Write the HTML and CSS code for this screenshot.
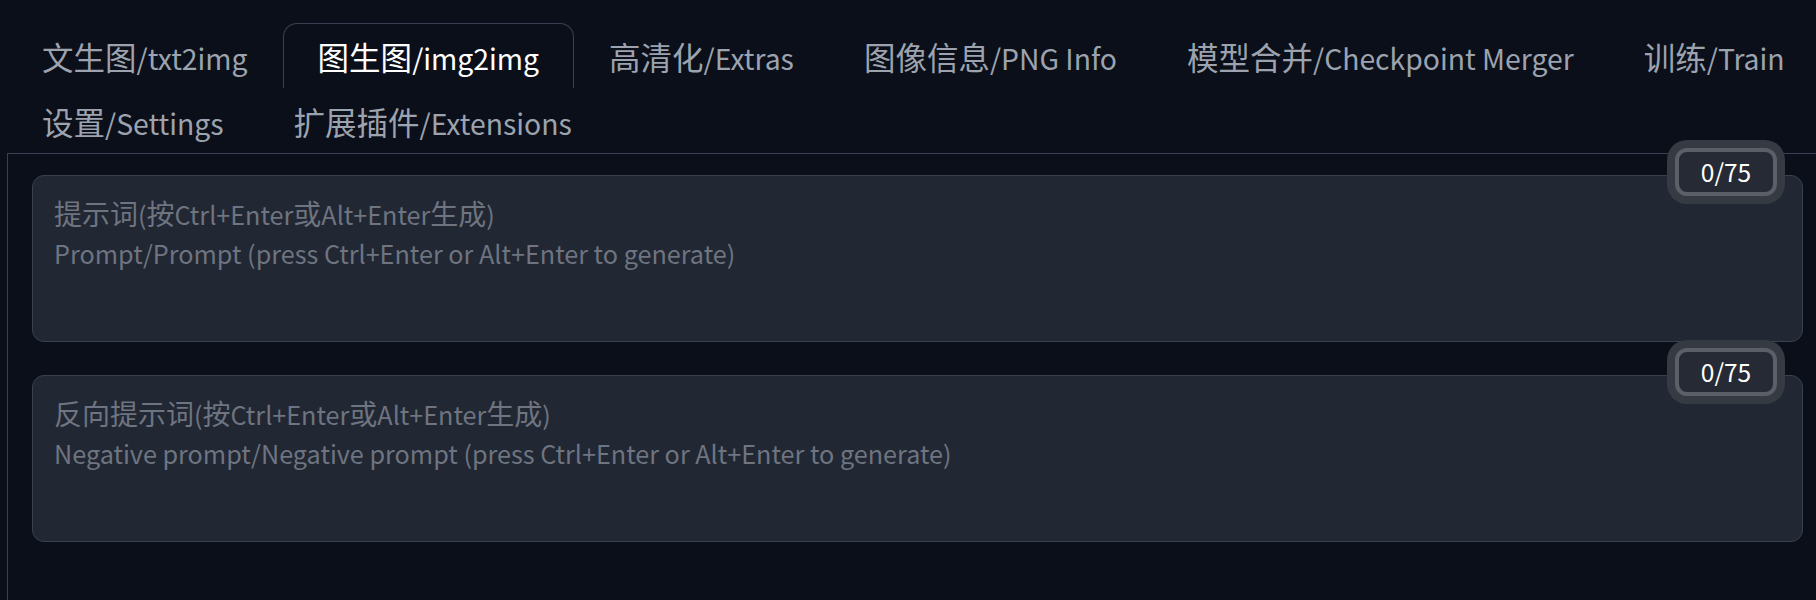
FILE: index.html
```html
<!DOCTYPE html>
<html lang="zh">
<head>
<meta charset="utf-8">
<link rel="stylesheet" href="styles.css">
</head>
<body>
<div class="app">
  <div class="tabs">
    <div class="tab">文生图<span class="en">/txt2img</span></div>
    <div class="tab active">图生图<span class="en">/img2img</span></div>
    <div class="tab">高清化<span class="en">/Extras</span></div>
    <div class="tab">图像信息<span class="en">/PNG Info</span></div>
    <div class="tab">模型合并<span class="en">/Checkpoint Merger</span></div>
    <div class="tab">训练<span class="en">/Train</span></div>
    <div class="tab">设置<span class="en">/Settings</span></div>
    <div class="tab">扩展插件<span class="en">/Extensions</span></div>
  </div>
  <div class="panel">
    <div class="prompt">
      <div class="field">
        <div class="ph">提示词<span class="en">(</span>按<span class="en">Ctrl+Enter</span>或<span class="en">Alt+Enter</span>生成<span class="en">)</span></div>
        <div class="ph"><span class="en">Prompt/Prompt (press Ctrl+Enter or Alt+Enter to generate)</span></div>
      </div>
      <span class="counter">0/75</span>
    </div>
    <div class="prompt">
      <div class="field">
        <div class="ph">反向提示词<span class="en">(</span>按<span class="en">Ctrl+Enter</span>或<span class="en">Alt+Enter</span>生成<span class="en">)</span></div>
        <div class="ph"><span class="en">Negative prompt/Negative prompt (press Ctrl+Enter or Alt+Enter to generate)</span></div>
      </div>
      <span class="counter">0/75</span>
    </div>
  </div>
</div>
</body>
</html>
```

FILE: styles.css
```css
html, body {
  margin: 0;
  padding: 0;
  background: #0b0f19;
  height: 100%;
  overflow: hidden;
}
.app {
  font-family: "Noto Sans CJK SC", "Noto Sans", sans-serif;
  width: 1824px;
  margin-left: 7px;
  padding-top: 23px;
  height: 100%;
  box-sizing: border-box;
  display: flex;
  flex-direction: column;
}
.en {
  font-size: 0.9em;
}
.tabs {
  display: flex;
  flex-wrap: wrap;
}
.tab {
  font-size: 31.5px;
  line-height: 46px;
  height: 46px;
  padding: 9px 34px;
  color: #9ca3af;
  border: 1px solid transparent;
  border-bottom: none;
  border-radius: 14px 14px 0 0;
  white-space: nowrap;
}
.tab.active {
  color: #ffffff;
  border-color: #374151;
}
.panel {
  flex: 1;
  border-top: 1px solid #374151;
  border-left: 1px solid #374151;
  padding: 21px 28px 0 24px;
  display: flex;
  flex-direction: column;
  gap: 33px;
}
.prompt {
  position: relative;
}
.field {
  height: 129px;
  background: #212733;
  border: 1px solid #3a414d;
  border-radius: 12px;
  padding: 18px 20px 18px 21px;
}
.ph {
  font-size: 28px;
  line-height: 39px;
  height: 39px;
  color: #6e7480;
  white-space: nowrap;
}
.counter {
  position: absolute;
  top: -27px;
  right: 26px;
  width: 94px;
  height: 40px;
  box-sizing: content-box;
  border: 4px solid #5a5f68;
  border-radius: 12px;
  background: #252a35;
  box-shadow: 0 0 0 8px #363a42;
  color: #ffffff;
  font-size: 24.5px;
  line-height: 39px;
  text-align: center;
}
```
